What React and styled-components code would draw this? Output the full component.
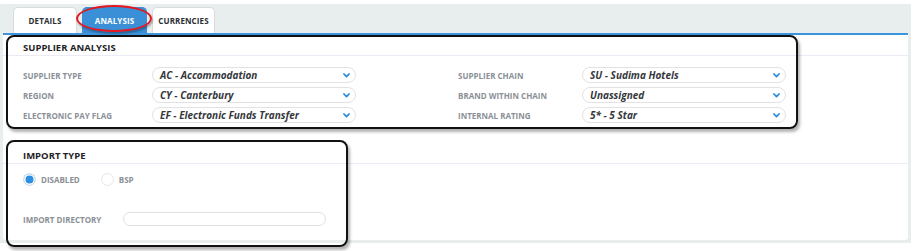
import React from "react";
import styled, { createGlobalStyle } from "styled-components";

const Global = createGlobalStyle`
  html, body { margin: 0; padding: 0; background: #ffffff; }
  body { font-family: "Open Sans", "Noto Sans", sans-serif; }
  * { box-sizing: border-box; }
`;

const Root = styled.div`
  position: relative;
  width: 917px;
  height: 251px;
  padding-top: 4px;
`;

const Frame = styled.div`
  width: 911px;
  height: 239px;
  background: #e8eded;
  padding: 0 3px 3px;
  display: flex;
  flex-direction: column;
`;

const TabBar = styled.div`
  height: 29px;
  display: flex;
  align-items: flex-end;
  gap: 5px;
  padding-left: 10px;
`;

const Tab = styled.div`
  height: 26px;
  width: ${(p) => p.$w}px;
  display: flex;
  align-items: center;
  justify-content: center;
  border-radius: 5px 5px 0 0;
  font-size: 8px;
  font-weight: 700;
  letter-spacing: 0.1px;
  color: ${(p) => (p.$active ? "#ffffff" : "#2b2f36")};
  background: ${(p) => (p.$active ? "#3b8fd6" : "#ffffff")};
  border: 1px solid ${(p) => (p.$active ? "#3b8fd6" : "#d9dcdc")};
  border-bottom: none;
`;

const Panel = styled.div`
  flex: 1;
  background: #ffffff;
  border-top: 2px solid #3b94dc;
  border-radius: 0 0 3px 3px;
  display: flex;
  flex-direction: column;
`;

const SectionHead = styled.div`
  padding: ${(p) => p.$top}px 20px 1px;
  border-bottom: 1px solid #ebebf5;
  font-size: 9.5px;
  line-height: 12px;
  font-weight: 700;
  color: #1f2227;
`;

const Columns = styled.div`
  display: grid;
  grid-template-columns: 435px 1fr;
  padding: 11px 0 0 20px;
`;

const Column = styled.div`
  display: flex;
  flex-direction: column;
  gap: 4px;
`;

const Field = styled.div`
  display: grid;
  grid-template-columns: ${(p) => p.$label}px ${(p) => p.$input}px;
  align-items: center;
`;

const Label = styled.div`
  font-size: 8px;
  font-weight: 700;
  color: #8b9096;
`;

const Select = styled.div`
  height: 16px;
  border: 1px solid #e2e2e2;
  border-radius: 8px;
  display: flex;
  align-items: center;
  justify-content: space-between;
  padding: 0 5px 0 7px;
  font-size: 10px;
  font-weight: 700;
  font-style: italic;
  color: #34373c;
`;

const TextInput = styled.div`
  height: 14px;
  border: 1px solid #e0e0e0;
  border-radius: 8px;
  background: #fff;
`;

const RadioRow = styled.div`
  display: flex;
  align-items: center;
  padding: 9px 0 0 20px;
`;

const RadioItem = styled.div`
  display: flex;
  align-items: center;
  gap: 5px;
  margin-right: 21px;
  font-size: 8px;
  font-weight: 700;
  color: #8b9096;
`;

const RadioCircle = styled.span`
  width: 13px;
  height: 13px;
  border-radius: 50%;
  border: 1px solid #e6e6e6;
  background: ${(p) => (p.$on ? "#2e8fe0" : "#ffffff")};
  box-shadow: inset 0 0 0 1.5px #ffffff;
`;

const DirRow = styled.div`
  padding: 26px 0 0 20px;
`;

const Annotation = styled.div`
  position: absolute;
  left: ${(p) => p.$x}px;
  top: ${(p) => p.$y}px;
  width: ${(p) => p.$w}px;
  height: ${(p) => p.$h}px;
  border: 2px solid #111;
  border-radius: 8px;
  box-shadow: 2px 3px 3px rgba(0, 0, 0, 0.3);
  pointer-events: none;
`;

const Ellipse = styled.div`
  position: absolute;
  left: 76px;
  top: 5px;
  width: 76px;
  height: 27px;
  border: 2px solid #e3171d;
  border-radius: 50%;
  box-shadow: 1px 2px 2px rgba(0, 0, 0, 0.3);
  pointer-events: none;
`;

const Chevron = () => (
  <svg width="7" height="5" viewBox="0 0 7 5">
    <path d="M1 1 L3.5 3.6 L6 1" fill="none" stroke="#2f8ede" strokeWidth="1.8" strokeLinecap="round" strokeLinejoin="round" />
  </svg>
);

const left = [
  ["SUPPLIER TYPE", "AC - Accommodation"],
  ["REGION", "CY - Canterbury"],
  ["ELECTRONIC PAY FLAG", "EF - Electronic Funds Transfer"],
];
const right = [
  ["SUPPLIER CHAIN", "SU - Sudima Hotels"],
  ["BRAND WITHIN CHAIN", "Unassigned"],
  ["INTERNAL RATING", "5* - 5 Star"],
];

export default function App() {
  return (
    <Root>
      <Global />
      <Frame>
        <TabBar>
          <Tab $w={64}>DETAILS</Tab>
          <Tab $w={65} $active>ANALYSIS</Tab>
          <Tab $w={63}>CURRENCIES</Tab>
        </TabBar>
        <Panel>
          <SectionHead $top={7}>SUPPLIER ANALYSIS</SectionHead>
          <Columns>
            <Column>
              {left.map(([l, v]) => (
                <Field key={l} $label={129} $input={204}>
                  <Label>{l}</Label>
                  <Select>
                    <span>{v}</span>
                    <Chevron />
                  </Select>
                </Field>
              ))}
            </Column>
            <Column>
              {right.map(([l, v]) => (
                <Field key={l} $label={124} $input={204}>
                  <Label>{l}</Label>
                  <Select>
                    <span>{v}</span>
                    <Chevron />
                  </Select>
                </Field>
              ))}
            </Column>
          </Columns>
          <SectionHead $top={27}>IMPORT TYPE</SectionHead>
          <RadioRow>
            <RadioItem>
              <RadioCircle $on />
              DISABLED
            </RadioItem>
            <RadioItem>
              <RadioCircle />
              BSP
            </RadioItem>
          </RadioRow>
          <DirRow>
            <Field $label={100} $input={203}>
              <Label>IMPORT DIRECTORY</Label>
              <TextInput />
            </Field>
          </DirRow>
        </Panel>
      </Frame>
      <Ellipse />
      <Annotation $x={6} $y={35} $w={792} $h={94} />
      <Annotation $x={6} $y={140} $w={342} $h={107} />
    </Root>
  );
}
